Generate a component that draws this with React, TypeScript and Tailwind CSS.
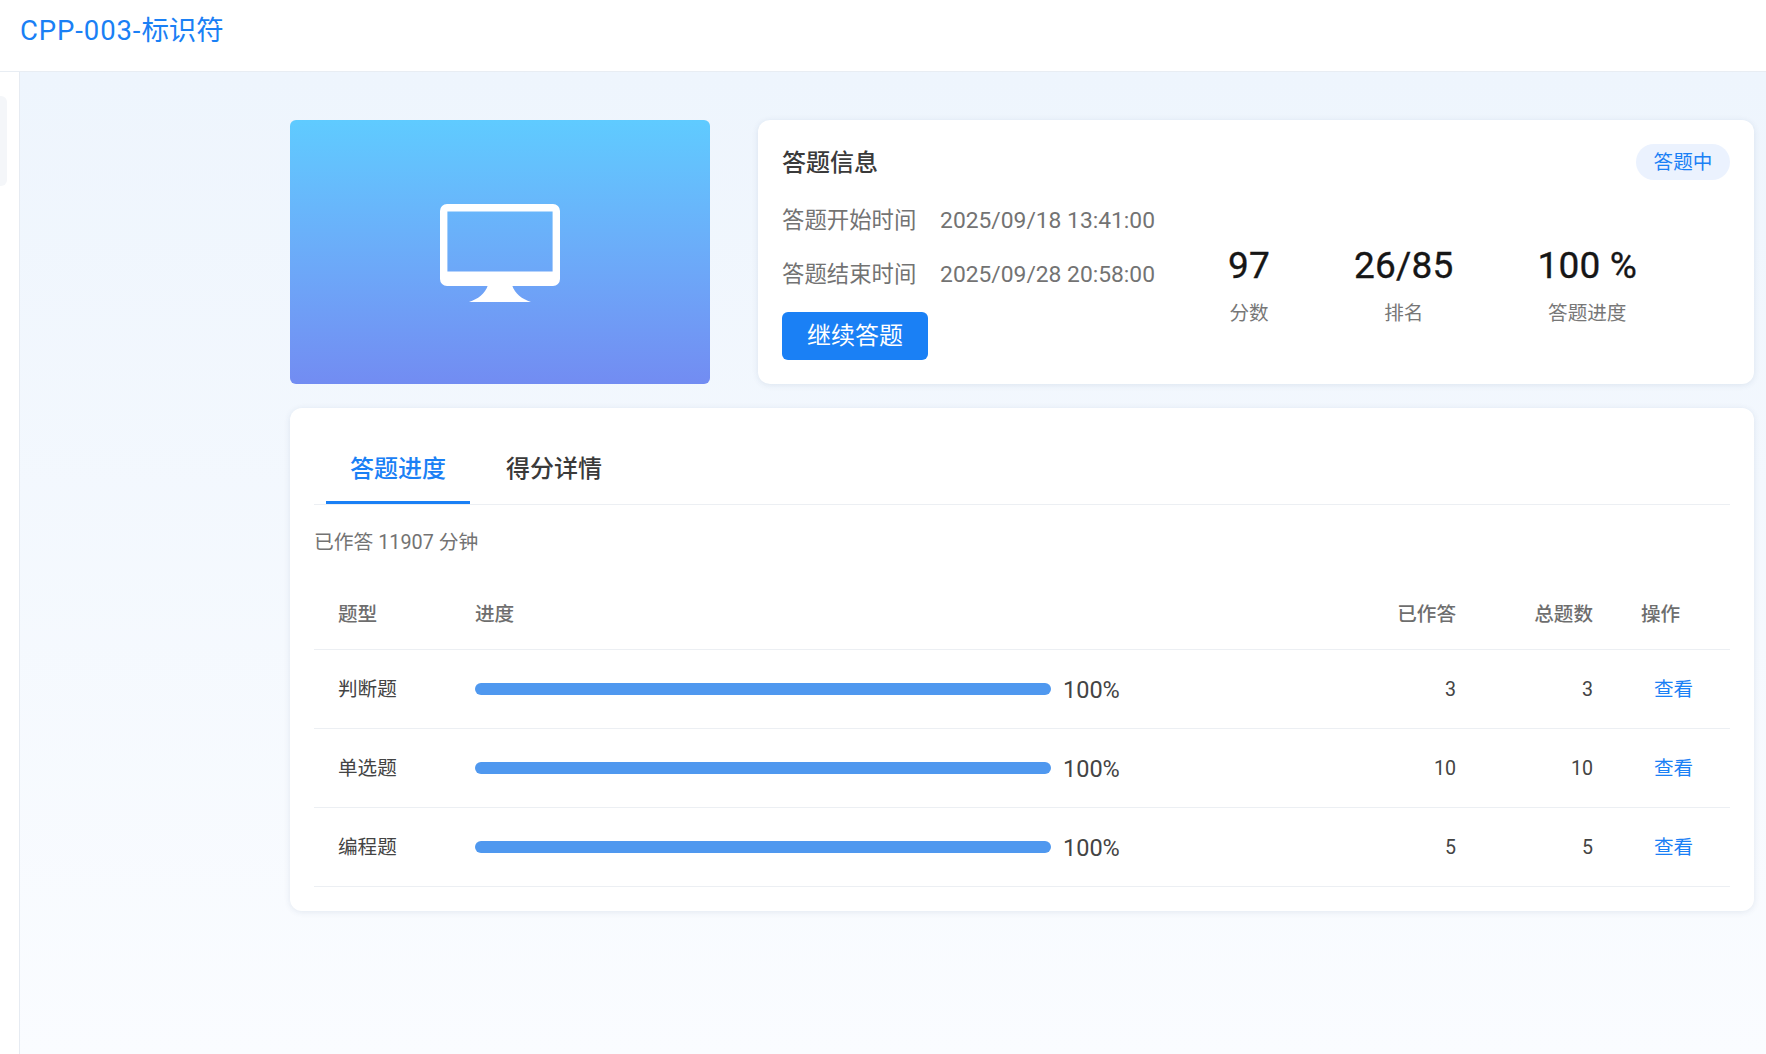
const font = "font-['Roboto','Noto_Sans_CJK_SC',sans-serif]";

const rows = [
  { name: "判断题", done: 3, total: 3 },
  { name: "单选题", done: 10, total: 10 },
  { name: "编程题", done: 5, total: 5 },
];

function Monitor() {
  return (
    <svg width="120" height="98" viewBox="0 0 120 98" fill="#fff">
      <path
        fillRule="evenodd"
        d="M7 0H113A7 7 0 0 1 120 7V75A7 7 0 0 1 113 82H7A7 7 0 0 1 0 75V7A7 7 0 0 1 7 0ZM7.4 7.6V67.6H112.6V7.6Z"
      />
      <path d="M48 81C45 90 38 95 29 98H91C82 95 75 90 72 81Z" />
    </svg>
  );
}

function Stat({ value, label }: { value: string; label: string }) {
  return (
    <div className="flex flex-col items-center">
      <div className="text-[37px] leading-[44px] font-normal text-[#161616] whitespace-nowrap tracking-[0.2px] [-webkit-text-stroke:0.35px_#161616]">{value}</div>
      <div className="mt-[11px] text-[19.6px] leading-[30px] text-[#777]">{label}</div>
    </div>
  );
}

export default function App() {
  return (
    <div className={`${font} w-full h-[1054px] overflow-hidden flex flex-col bg-white`}>
      <header className="h-[72px] shrink-0 bg-white border-b border-[#e8edf3] pl-[20px] pt-[13px]">
        <h1 className="text-[27.5px] leading-[36px] text-[#1a80f5] font-normal">
          <span className="tracking-[0.9px]">CPP-003-</span>标识符
        </h1>
      </header>
      <div className="flex flex-1 min-h-0">
        <aside className="w-[20px] shrink-0 bg-white border-r border-[#e6ebf2] pt-[24px]">
          <div className="w-[7px] h-[90px] bg-[#f4f6f9] rounded-r-[6px]" />
        </aside>
        <main className="flex-1 min-w-0 bg-gradient-to-b from-[#eef5fd] to-[#fafcff] pl-[270px] pr-[12px] pt-[48px]">
          <div className="flex gap-[48px]">
            <div className="w-[420px] h-[264px] shrink-0 rounded-[6px] bg-gradient-to-b from-[#5fcbff] to-[#728cf2] flex items-center justify-center pt-[2px]">
              <Monitor />
            </div>
            <section className="flex-1 h-[264px] bg-white rounded-[12px] shadow-[0_1px_6px_rgba(30,60,110,0.10)] px-[24px] pt-[24px]">
              <div className="flex items-center justify-between h-[36px]">
                <h2 className="text-[24px] leading-[36px] font-medium text-[#3a3a3a] pt-[1px]">答题信息</h2>
                <span className="h-[36px] w-[94px] rounded-full bg-[#ebf2fe] text-[#1a80f5] text-[19.6px] flex items-center justify-center pt-[2px]">答题中</span>
              </div>
              <div className="flex mt-[12px]">
                <div className="w-[373px] shrink-0">
                  <div className="h-[54px] flex items-center text-[22.4px] text-[#737373] whitespace-nowrap pt-[4px]">
                    <span className="w-[161px]">答题开始时间</span>
                    <span className="text-[22.8px]">2025/09/18 13:41:00</span>
                  </div>
                  <div className="h-[54px] flex items-center text-[22.4px] text-[#737373] whitespace-nowrap pt-[4px]">
                    <span className="w-[161px]">答题结束时间</span>
                    <span className="text-[22.8px]">2025/09/28 20:58:00</span>
                  </div>
                  <button className="mt-[12px] w-[146px] h-[48px] rounded-[6px] bg-[#1a80f5] text-white text-[24px] flex items-center justify-center">继续答题</button>
                </div>
                <div className="flex items-start gap-[84px] pl-[73px] pt-[52px]">
                  <Stat value="97" label="分数" />
                  <Stat value="26/85" label="排名" />
                  <Stat value="100 %" label="答题进度" />
                </div>
              </div>
            </section>
          </div>

          <section className="mt-[24px] bg-white rounded-[12px] shadow-[0_1px_6px_rgba(30,60,110,0.10)] px-[24px] pt-[24px] pb-[24px]">
            <div className="flex border-b border-[#eceff3] h-[73px] pl-[12px]">
              <div className="w-[144px] h-[72px] flex items-center justify-center text-[24px] font-medium text-[#1a80f5] border-b-[3px] border-[#1a80f5] pt-[5px]">答题进度</div>
              <div className="w-[168px] h-[72px] flex items-center justify-center text-[24px] font-medium text-[#3a3a3a] pt-[2px]">得分详情</div>
            </div>
            <p className="mt-[23px] h-[30px] text-[19.8px] leading-[30px] text-[#737373]">已作答 11907 分钟</p>
            <div className="mt-[19px] grid grid-cols-[137px_1fr_137px_137px_113px] h-[73px] items-center border-b border-[#eceff3] text-[19.6px] text-[#6e6e6e] font-medium pt-[4px]">
              <div className="pl-[24px]">题型</div>
              <div className="pl-[24px]">进度</div>
              <div className="pr-[24px] text-right">已作答</div>
              <div className="pr-[24px] text-right">总题数</div>
              <div className="pl-[24px]">操作</div>
            </div>
            {rows.map((r) => (
              <div key={r.name} className="grid grid-cols-[137px_1fr_137px_137px_113px] h-[79px] items-center border-b border-[#eceff3] text-[19.6px] text-[#444]">
                <div className="pl-[24px] pt-[2px]">{r.name}</div>
                <div className="pl-[24px] flex items-center gap-[12px]">
                  <div className="w-[576px] h-[12px] rounded-full bg-[#4f98ef]" />
                  <span className="text-[23.5px] text-[#444] pt-[4px]">100%</span>
                </div>
                <div className="pr-[24px] text-right pt-[2px]">{r.done}</div>
                <div className="pr-[24px] text-right pt-[2px]">{r.total}</div>
                <div className="pl-[37px] text-[#1a80f5] pt-[2px]">查看</div>
              </div>
            ))}
          </section>
        </main>
      </div>
    </div>
  );
}
